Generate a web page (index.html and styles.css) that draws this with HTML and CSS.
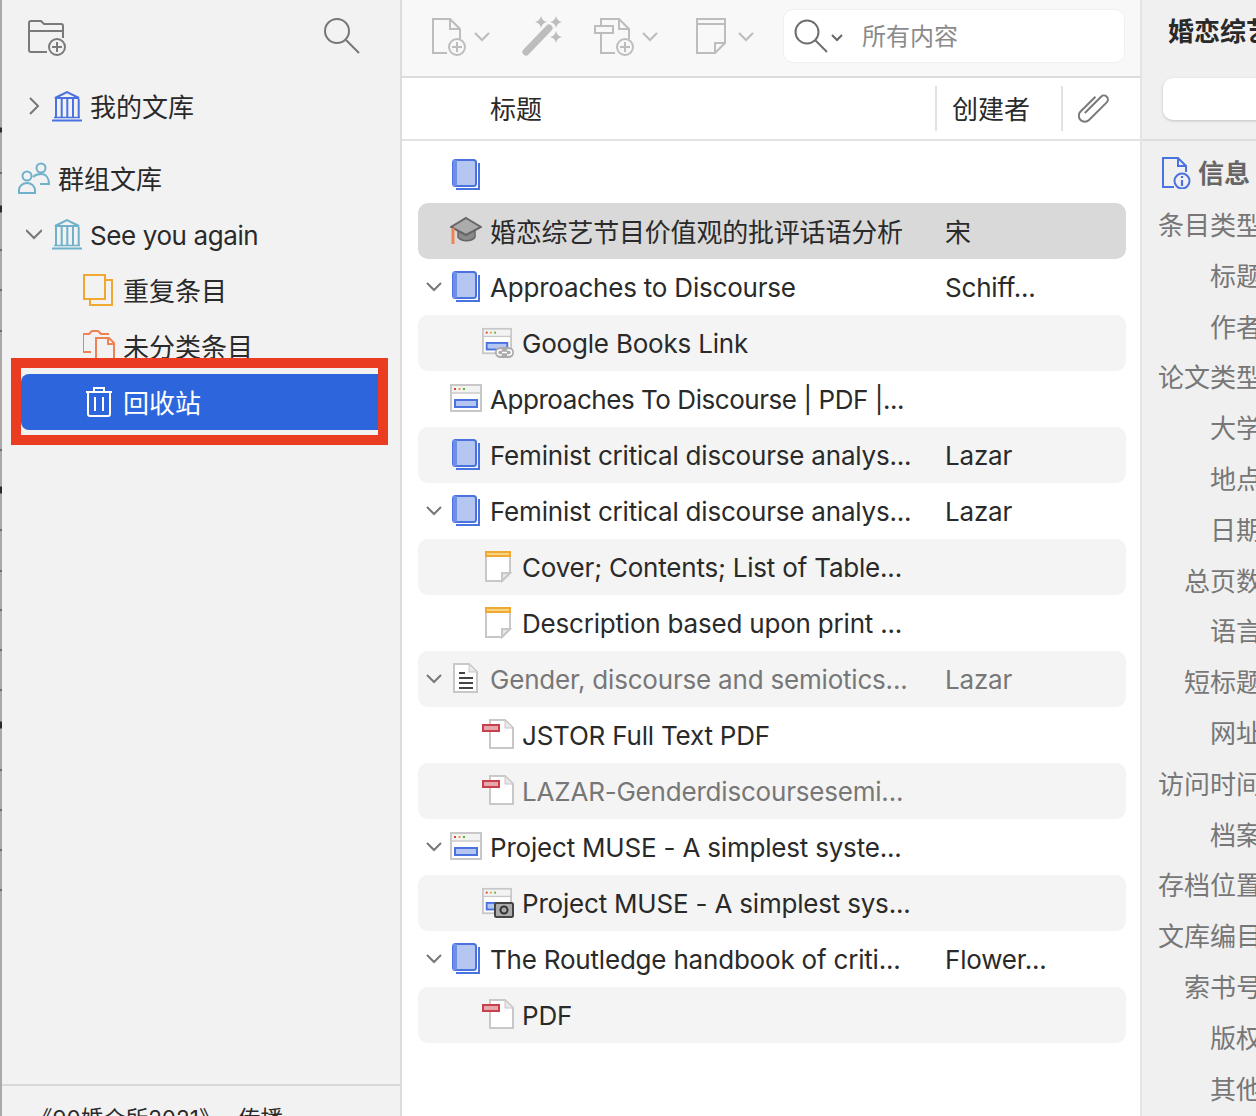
FILE: index.html
```html
<!DOCTYPE html>
<html lang="zh-CN">
<head>
  <meta charset="UTF-8">
  <title>Zotero</title>
  <link rel="stylesheet" href="styles.css">
</head>
<body>
  <svg class="defs" width="0" height="0">
    <symbol id="i-library" viewBox="0 0 30 32">
      <path d="M3 8 15 2l12 6z" fill="none" stroke="currentColor" stroke-width="2"/>
      <path d="M4 9v19M9.700 9v19M15.300 9v19M21 9v19M26.700 9v19" stroke="currentColor" stroke-width="2"/>
      <path d="M2 27.500h26" stroke="currentColor" stroke-width="1.500"/>
      <path d="M0 30.500h30" stroke="currentColor" stroke-width="2"/>
    </symbol>
    <symbol id="i-book" viewBox="0 0 32 32">
      <path d="M29 4v26H6" fill="none" stroke="#4a72e0" stroke-width="2"/>
      <rect x="3" y="1" width="23" height="26" rx="2.500" fill="#b5c6f0" stroke="#4a72e0" stroke-width="2"/>
      <rect x="3" y="1" width="4" height="26" fill="#6f8fe6"/>
    </symbol>
    <symbol id="i-web" viewBox="0 0 32 32">
      <rect x="1" y="2" width="30" height="26" fill="#fff" stroke="#c8c8c8" stroke-width="2"/>
      <rect x="2" y="3" width="28" height="6" fill="#f3f3f3"/>
      <path d="M1 10h30" stroke="#c8c8c8" stroke-width="1.500"/>
      <rect x="4" y="5" width="2" height="2" fill="#d2453d"/>
      <rect x="8.500" y="5" width="2" height="2" fill="#eaa332"/>
      <rect x="13" y="5" width="2" height="2" fill="#58ae3f"/>
      <rect x="5" y="17" width="22" height="7" fill="#b5c6f0" stroke="#4a72e0" stroke-width="2"/>
    </symbol>
    <symbol id="i-note" viewBox="0 0 32 32">
      <path d="M4 5v25h16l8-8V5" fill="#fff" stroke="#c8c8c8" stroke-width="2"/>
      <path d="M20 30v-8h8z" fill="#e8e8e8" stroke="#c8c8c8" stroke-width="2"/>
      <rect x="3" y="0" width="26" height="6" fill="#f0a830"/>
      <rect x="5" y="2" width="22" height="2" fill="#f8d487"/>
    </symbol>
    <symbol id="i-pdf" viewBox="0 0 32 32">
      <path d="M8 1h15l8 8v20H8z" fill="#fff" stroke="#c8c8c8" stroke-width="2"/>
      <path d="M23 1v8h8z" fill="#e8e8e8" stroke="#c8c8c8" stroke-width="1"/>
      <rect x="1" y="6" width="16" height="6" fill="#e8a5ab" stroke="#c8404a" stroke-width="2"/>
    </symbol>
    <symbol id="i-doc" viewBox="0 0 32 32">
      <path d="M4 1h15l8 8v20H4z" fill="#fff" stroke="#c8c8c8" stroke-width="2"/>
      <path d="M19 1v8h8z" fill="#e8e8e8" stroke="#c8c8c8" stroke-width="1"/>
      <path d="M9 10h6M9 15h14M9 20h14M9 25h14" stroke="#444" stroke-width="2"/>
    </symbol>
    <symbol id="i-star" viewBox="0 0 12 12">
      <path d="M6 0q1 5 6 6q-5 1-6 6q-1-5-6-6q5-1 6-6z" fill="currentColor"/>
    </symbol>
  </svg>

  <div class="window">
    <svg class="edge" width="2" height="1116" viewBox="0 0 2 1116">
      <path d="M0 128h2v4H0zM0 173h2M0 206h2v6H0zM0 250h2M0 290h2M0 331h2M0 450h2M0 487h2v6H0zM0 530h2M0 571h2M0 610h2M0 650h2M0 690h2M0 722h2v6H0zM0 770h2M0 810h2M0 850h2M0 890h2" stroke="#333" fill="#222"/>
    </svg>

    <aside class="sidebar">
      <div class="side-tools">
        <svg class="folder-add" width="38" height="36" viewBox="0 0 38 36" fill="none" stroke="#7a7a7a" stroke-width="2">
          <path d="M19 32H3a2 2 0 0 1-2-2V3a2 2 0 0 1 2-2h10l3 3h17a2 2 0 0 1 2 2v12"/>
          <path d="M1 11h34"/>
          <circle cx="29" cy="27" r="8"/>
          <path d="M29 22v10M24 27h10"/>
        </svg>
        <svg class="side-search" width="38" height="38" viewBox="0 0 38 38" fill="none" stroke="#777" stroke-width="2">
          <circle cx="14" cy="14" r="12"/>
          <path d="M23 23l13 13"/>
        </svg>
      </div>

      <div class="tree">
        <div class="side-row lib mine">
          <svg class="twist" width="16" height="18" viewBox="0 0 16 18"><path d="M4 1l8 8-8 8" fill="none" stroke="#777" stroke-width="2"/></svg>
          <svg class="lib-icon blue" width="30" height="32"><use href="#i-library"/></svg>
          <span class="cjk">我的文库</span>
        </div>
        <div class="side-row group-head">
          <svg class="people" width="32" height="32" viewBox="0 0 32 32" fill="none" stroke="#6fb0cb" stroke-width="2">
            <circle cx="23" cy="6" r="4.500"/>
            <path d="M15 15c2-2 5-3 8-3 5 0 8 4 8 10h-9"/>
            <circle cx="9" cy="14" r="4.500"/>
            <path d="M1 31v-3c0-4 4-7 8-7s8 3 8 7v3z"/>
          </svg>
          <span class="cjk">群组文库</span>
        </div>
        <div class="side-row lib">
          <svg class="twist" width="16" height="18" viewBox="0 0 16 18"><path d="M0 5l8 8 8-8" fill="none" stroke="#777" stroke-width="2"/></svg>
          <svg class="lib-icon teal" width="30" height="32"><use href="#i-library"/></svg>
          <span class="lib-name">See you again</span>
        </div>
        <div class="side-row sub">
          <svg width="32" height="32" viewBox="2 0 32 32" fill="none" stroke="#f0a830" stroke-width="2">
            <rect x="3" y="1" width="21" height="24"/>
            <path d="M24 6h7v25H9v-6"/>
          </svg>
          <span class="cjk">重复条目</span>
        </div>
        <div class="side-row sub">
          <svg width="32" height="32" viewBox="1 0 32 32" fill="none" stroke="#ef8254" stroke-width="2">
            <path d="M9 22H2a1 1 0 0 1-1-1V5a1 1 0 0 1 1-1h5l3-3h6l3 3h8"/>
            <path d="M14 8h13l5 5v18H14z"/>
            <path d="M26 8v6h6"/>
          </svg>
          <span class="cjk">未分类条目</span>
        </div>
        <div class="side-row sub selected">
          <svg width="32" height="32" viewBox="0 0 32 32" fill="none" stroke="#fff" stroke-width="2">
            <path d="M3 6h26M11 5V2h10v3"/>
            <path d="M5 6v22a2 2 0 0 0 2 2h18a2 2 0 0 0 2-2V6"/>
            <path d="M12 11v14M20 11v14"/>
          </svg>
          <span class="cjk">回收站</span>
        </div>
      </div>

      <div class="tag-pane">《90婚介所2021》- 传播</div>
    </aside>

    <main class="items">
      <div class="toolbar">
        <svg class="tool t-new" width="34" height="38" viewBox="0 0 34 38" fill="none" stroke="#bdbdbd" stroke-width="2">
          <path d="M15 35H1V1h17l10 10v10"/><path d="M18 1v10h10"/>
          <circle cx="25" cy="29" r="8"/><path d="M25 24v10M20 29h10"/>
        </svg>
        <svg class="chev" width="16" height="10" viewBox="0 0 16 10"><path d="M1 1l7 7 7-7"/></svg>
        <svg class="tool t-wand" width="40" height="40" viewBox="0 0 40 40">
          <path d="M4 36l23-24" stroke="#bdbdbd" stroke-width="7" stroke-linecap="round"/>
          <svg x="13" y="0" width="12" height="12" color="#bdbdbd"><use href="#i-star"/></svg>
          <svg x="28" y="0" width="12" height="12" color="#bdbdbd"><use href="#i-star"/></svg>
          <svg x="28" y="15" width="12" height="12" color="#bdbdbd"><use href="#i-star"/></svg>
        </svg>
        <svg class="tool t-attach" width="40" height="38" viewBox="0 0 40 38" fill="none" stroke="#bdbdbd" stroke-width="2">
          <path d="M21 35H7V15M7 7V1h18l10 10v10"/><path d="M25 1v10h10"/>
          <rect x="1" y="8" width="18" height="7" fill="#f8f8f8"/>
          <circle cx="31" cy="29" r="8" fill="#f8f8f8"/><path d="M31 24v10M26 29h10"/>
        </svg>
        <svg class="chev" width="16" height="10" viewBox="0 0 16 10"><path d="M1 1l7 7 7-7"/></svg>
        <svg class="tool t-note" width="30" height="36" viewBox="0 0 30 36" fill="none" stroke="#bdbdbd" stroke-width="2">
          <path d="M19 35H1V1h28v24z"/><path d="M1 6h28"/><path d="M19 35V25h10"/>
        </svg>
        <svg class="chev chev-note" width="16" height="10" viewBox="0 0 16 10"><path d="M1 1l7 7 7-7"/></svg>
        <div class="search-box">
          <svg width="34" height="34" viewBox="0 0 34 34" fill="none" stroke="#6e6e6e" stroke-width="2">
            <circle cx="13" cy="13" r="11.500"/><path d="M21 21l12 12"/>
          </svg>
          <svg class="mini-chev" width="12" height="8" viewBox="0 0 12 8"><path d="M1 1l5 5 5-5" fill="none" stroke="#666" stroke-width="2"/></svg>
          <span>所有内容</span>
        </div>
      </div>

      <div class="col-head">
        <div class="col-title"><span class="cjk">标题</span></div>
        <div class="col-creator"><span class="cjk">创建者</span></div>
        <div class="col-attach">
          <svg width="32" height="30" viewBox="0 0 32 30">
            <path transform="translate(16 15) rotate(45)" d="M-3 10V-13a4 4 0 0 1 8 0V12a6 6 0 0 1-12 0V-9" fill="none" stroke="#7a7a7a" stroke-width="2"/>
          </svg>
        </div>
      </div>

      <div class="rows">
        <div class="row"><span class="slot"></span><svg class="ico"><use href="#i-book"/></svg><span class="title"></span><span class="creator"></span></div>

        <div class="row picked"><span class="slot"></span>
          <svg class="ico" viewBox="0 0 32 32">
            <path d="M8 15v7c3 5 14 5 17 0v-7" fill="#8a8a8a" stroke="#666" stroke-width="1.500"/>
            <path d="M16 3 31 12 16 20 1 12z" fill="#ababab" stroke="#666" stroke-width="2"/>
            <path d="M3 13v16" stroke="#ef8254" stroke-width="3"/>
          </svg>
          <span class="title cjk">婚恋综艺节目价值观的批评话语分析</span><span class="creator cjk">宋</span></div>

        <div class="row"><svg class="slot twisty" viewBox="0 0 16 10"><path d="M1 1l7 7 7-7"/></svg><svg class="ico"><use href="#i-book"/></svg><span class="title">Approaches to Discourse</span><span class="creator">Schiff...</span></div>
        <div class="row child shade">
          <svg class="ico" viewBox="0 0 32 32">
            <use href="#i-web" width="30" height="30"/>
            <rect x="13" y="20" width="19" height="11" rx="5.500" fill="#ababab"/>
            <path d="M20 23h-2a2.500 2.500 0 0 0 0 5h2M25 23h2a2.500 2.500 0 0 1 0 5h-2M20 25.500h5" fill="none" stroke="#fff" stroke-width="1.500"/>
          </svg>
          <span class="title">Google Books Link</span><span class="creator"></span></div>
        <div class="row"><span class="slot"></span><svg class="ico"><use href="#i-web"/></svg><span class="title tight">Approaches To Discourse | PDF |...</span><span class="creator"></span></div>
        <div class="row shade"><span class="slot"></span><svg class="ico"><use href="#i-book"/></svg><span class="title">Feminist critical discourse analys...</span><span class="creator">Lazar</span></div>
        <div class="row"><svg class="slot twisty" viewBox="0 0 16 10"><path d="M1 1l7 7 7-7"/></svg><svg class="ico"><use href="#i-book"/></svg><span class="title">Feminist critical discourse analys...</span><span class="creator">Lazar</span></div>
        <div class="row child shade"><svg class="ico"><use href="#i-note"/></svg><span class="title">Cover; Contents; List of Table...</span><span class="creator"></span></div>
        <div class="row child"><svg class="ico"><use href="#i-note"/></svg><span class="title">Description based upon print ...</span><span class="creator"></span></div>
        <div class="row shade dim"><svg class="slot twisty" viewBox="0 0 16 10"><path d="M1 1l7 7 7-7"/></svg><svg class="ico"><use href="#i-doc"/></svg><span class="title">Gender, discourse and semiotics...</span><span class="creator">Lazar</span></div>
        <div class="row child"><svg class="ico"><use href="#i-pdf"/></svg><span class="title">JSTOR Full Text PDF</span><span class="creator"></span></div>
        <div class="row child shade dim"><svg class="ico"><use href="#i-pdf"/></svg><span class="title">LAZAR-Genderdiscoursesemi...</span><span class="creator"></span></div>
        <div class="row"><svg class="slot twisty" viewBox="0 0 16 10"><path d="M1 1l7 7 7-7"/></svg><svg class="ico"><use href="#i-web"/></svg><span class="title">Project MUSE - A simplest syste...</span><span class="creator"></span></div>
        <div class="row child shade">
          <svg class="ico" viewBox="0 0 32 32">
            <use href="#i-web" width="30" height="30"/>
            <rect x="13" y="16" width="18" height="14" rx="1.500" fill="#ababab" stroke="#444" stroke-width="2"/>
            <circle cx="22" cy="23" r="3.500" fill="none" stroke="#333" stroke-width="2"/>
          </svg>
          <span class="title">Project MUSE - A simplest sys...</span><span class="creator"></span></div>
        <div class="row"><svg class="slot twisty" viewBox="0 0 16 10"><path d="M1 1l7 7 7-7"/></svg><svg class="ico"><use href="#i-book"/></svg><span class="title">The Routledge handbook of criti...</span><span class="creator">Flower...</span></div>
        <div class="row child shade"><svg class="ico"><use href="#i-pdf"/></svg><span class="title">PDF</span><span class="creator"></span></div>
      </div>
    </main>

    <section class="detail">
      <div class="detail-head">
        <div class="detail-title">婚恋综艺节目价值观的批评话语分析</div>
        <div class="detail-btn"></div>
      </div>
      <div class="info-head">
        <svg width="30" height="32" viewBox="0 0 30 32">
          <path d="M12 30H1V1h15l8 8v6" fill="none" stroke="#4a72e0" stroke-width="2"/>
          <path d="M16 1v8h8" fill="none" stroke="#4a72e0" stroke-width="2"/>
          <circle cx="20" cy="24" r="7.500" fill="#f0f0f0" stroke="#4a72e0" stroke-width="2"/>
          <path d="M20 23v6M20 19v2" stroke="#4a72e0" stroke-width="2.200"/>
        </svg>
        <span>信息</span>
      </div>
      <ul class="fields">
        <li>条目类型</li>
        <li>标题</li>
        <li>作者</li>
        <li>论文类型</li>
        <li>大学</li>
        <li>地点</li>
        <li>日期</li>
        <li>总页数</li>
        <li>语言</li>
        <li>短标题</li>
        <li>网址</li>
        <li>访问时间</li>
        <li>档案</li>
        <li>存档位置</li>
        <li>文库编目</li>
        <li>索书号</li>
        <li>版权</li>
        <li>其他</li>
      </ul>
    </section>
  </div>

  <div class="callout"></div>
</body>
</html>
```

FILE: styles.css
```css
html, body {
  margin: 0;
  padding: 0;
  height: 100%;
  overflow: hidden;
}

body {
  position: relative;
  width: 1256px;
  height: 1116px;
  background: #fff;
  color: #2a2a2a;
  font-family: Inter, "Noto Sans CJK SC", sans-serif;
  font-size: 26px;
}

.defs {
  position: absolute;
}

.window {
  display: flex;
  height: 1116px;
}

.edge {
  flex: none;
  background: #a9a9a9;
}

/* CJK text sits a pixel low next to the latin rows */
.cjk {
  margin-bottom: 2px;
}

/* left pane */
.sidebar {
  flex: none;
  width: 398px;
  display: flex;
  flex-direction: column;
  background: #f2f2f2;
  border-right: 2px solid #dcdcdc;
}

.side-tools {
  flex: none;
  height: 78px;
  box-sizing: border-box;
  display: flex;
  justify-content: space-between;
  align-items: flex-start;
  padding: 18px 39px 0 26px;
}
.folder-add {
  margin-top: 2px;
}
.side-search {
  margin-top: -1px;
}

.tree {
  flex: 1;
}

.side-row {
  display: flex;
  align-items: center;
  height: 56px;
}
.side-row span {
  white-space: nowrap;
}

.lib {
  padding-left: 24px;
}
.mine {
  margin-bottom: 16px;
}
.twist {
  flex: none;
  width: 16px;
  margin-right: 10px;
}
.lib-icon {
  flex: none;
  margin-right: 8px;
}
.lib-name {
  margin-top: 2px;
  letter-spacing: -0.4px;
}
.blue { color: #4a72e0; }
.teal { color: #6fb0cb; }

.group-head {
  padding-left: 16px;
}
.people {
  margin-right: 8px;
}

.sub {
  padding-left: 81px;
}
.sub svg {
  flex: none;
  margin-right: 8px;
}

.selected {
  margin: 0 14px 0 19px;
  padding-left: 62px;
  background: #2d66dc;
  color: #fff;
  border-radius: 8px;
}

.tag-pane {
  flex: none;
  height: 32px;
  padding: 13px 0 0 28px;
  border-top: 2px solid #d8d8d8;
  font-size: 22.5px;
  white-space: nowrap;
  line-height: 40px;
  box-sizing: border-box;
}

/* item list */
.items {
  flex: none;
  width: 738px;
  display: flex;
  flex-direction: column;
  background: #fff;
}

.toolbar {
  flex: none;
  height: 76px;
  display: flex;
  align-items: flex-start;
  padding-left: 30px;
  background: #f8f8f8;
  border-bottom: 2px solid #dcdcdc;
}
.tool {
  flex: none;
  margin-top: 18px;
}
.chev {
  flex: none;
  margin: 32px 0 0 8px;
}
.chev-note {
  margin-left: 12px;
}
.chev path {
  fill: none;
  stroke: #bdbdbd;
  stroke-width: 2;
}
.t-wand {
  margin: 16px 0 0 32px;
}
.t-attach {
  margin-left: 32px;
}
.t-note {
  margin-left: 38px;
}

.search-box {
  flex: none;
  width: 342px;
  height: 54px;
  box-sizing: border-box;
  margin: 9px 0 0 29px;
  display: flex;
  align-items: center;
  padding-left: 10px;
  background: #fff;
  border: 1px solid #f0f0f0;
  border-radius: 10px;
  color: #8a8a8a;
  font-size: 24px;
}
.mini-chev {
  margin: 3px 0 0 3px;
}
.search-box span {
  margin: 0 0 4px 19px;
}

.col-head {
  flex: none;
  height: 61px;
  display: flex;
  align-items: center;
  border-bottom: 2px solid #e2e2e2;
}
.col-title {
  flex: none;
  width: 445px;
  padding-left: 88px;
  box-sizing: border-box;
  display: flex;
}
.col-creator,
.col-attach {
  flex: none;
  height: 45px;
  display: flex;
  align-items: center;
  box-sizing: border-box;
  border-left: 2px solid #e2e2e2;
  margin-top: -1px;
}
.col-title + .col-creator {
  margin-left: 88px;
}
.col-creator {
  width: 126px;
  padding-left: 15px;
}
.col-attach {
  padding-left: 15px;
}

.rows {
  flex: 1;
  padding-top: 6px;
}

.row {
  display: flex;
  align-items: center;
  height: 56px;
  margin: 0 14px 0 16px;
  border-radius: 10px;
  white-space: nowrap;
}
.row.shade {
  background: #f4f4f4;
}
.row.picked {
  background: #d9d9d9;
}
.row.dim {
  color: #777;
}
.row.child {
  padding-left: 64px;
}

.slot {
  flex: none;
  width: 32px;
}
.twisty {
  box-sizing: border-box;
  height: 10px;
  padding: 0 8px;
  overflow: visible;
}
.twisty path {
  fill: none;
  stroke: #777;
  stroke-width: 2;
}

.ico {
  flex: none;
  width: 32px;
  height: 32px;
  margin-right: 8px;
}

.title {
  flex: 1;
  letter-spacing: -0.2px;
}
.title.tight {
  letter-spacing: -0.45px;
}
.creator {
  flex: none;
  width: 181px;
  letter-spacing: -0.2px;
}

/* right pane */
.detail {
  flex: none;
  width: 114px;
  min-width: 0;
  background: #f0f0f0;
  border-left: 2px solid #e4e4e4;
  overflow: hidden;
}

.detail-head {
  height: 139px;
  border-bottom: 2px solid #dcdcdc;
  overflow: hidden;
  white-space: nowrap;
}
.detail-title {
  padding: 13px 0 0 26px;
  line-height: 38px;
  font-weight: 700;
}
.detail-btn {
  width: 200px;
  height: 42px;
  margin: 27px 0 0 21px;
  background: #fff;
  border-radius: 10px;
  box-shadow: 0 1px 3px rgba(0, 0, 0, 0.2);
}

.info-head {
  display: flex;
  align-items: center;
  height: 32px;
  margin-top: 16px;
  padding-left: 20px;
  color: #666;
  font-weight: 700;
  white-space: nowrap;
}
.info-head svg {
  flex: none;
  margin-right: 6px;
}
.info-head span {
  margin-bottom: 3px;
}

.fields {
  list-style: none;
  margin: 12px 0 0 0;
  padding: 0;
  width: 120px;
  color: #777;
}
.fields li {
  height: 50.8px;
  line-height: 50.8px;
  text-align: right;
  white-space: nowrap;
}

/* red annotation drawn over the screenshot */
.callout {
  position: absolute;
  left: 11px;
  top: 358px;
  width: 357px;
  height: 67px;
  border: 10px solid #ea3c20;
  pointer-events: none;
}
```
